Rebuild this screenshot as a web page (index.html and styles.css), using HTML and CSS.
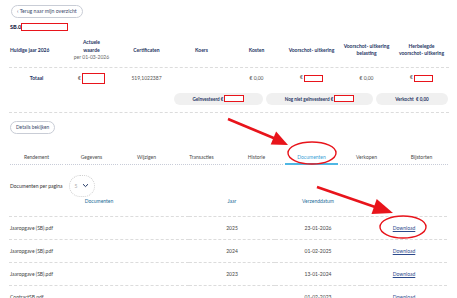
FILE: index.html
```html
<!DOCTYPE html>
<html lang="nl">
<head>
    <meta charset="UTF-8">
    <meta name="viewport" content="width=device-width, initial-scale=1.0">
    <title>SB.0 - Documenten</title>
    <link rel="stylesheet" href="styles.css">
</head>
<body>
    <div class="page">
        <a class="back-btn" href="#">&lsaquo; Terug naar mijn overzicht</a>
        <h1 class="fund">SB.0<span class="redact redact-title"></span></h1>

        <div class="summary">
            <div class="summary-row summary-head">
                <div class="cell first">Huidige jaar 2026</div>
                <div class="cell">Actuele<br>waarde<span class="sub">per 01-03-2026</span></div>
                <div class="cell">Certificaten</div>
                <div class="cell">Koers</div>
                <div class="cell">Kosten</div>
                <div class="cell">Voorschot- uitkering</div>
                <div class="cell">Voorschot- uitkering<br>belasting</div>
                <div class="cell">Herbelegde<br>voorschot- uitkering</div>
            </div>
            <div class="summary-row summary-total">
                <div class="cell label">Totaal</div>
                <div class="cell">&euro; <span class="redact redact-lg"></span></div>
                <div class="cell">519,1022387</div>
                <div class="cell"></div>
                <div class="cell">&euro; 0,00</div>
                <div class="cell">&euro; <span class="redact redact-sm"></span></div>
                <div class="cell">&euro; 0,00</div>
                <div class="cell">&euro; <span class="redact redact-sm"></span></div>
            </div>
            <div class="pills">
                <span class="pill pill-a">Geïnvesteerd &euro;<span class="redact redact-pill"></span></span>
                <span class="pill pill-b">Nog niet geïnvesteerd &euro;<span class="redact redact-pill"></span></span>
                <span class="pill pill-c">Verkocht &nbsp;&euro; 0,00</span>
            </div>
        </div>

        <a class="details-btn" href="#">Details bekijken</a>

        <nav class="tabs">
            <a class="tab" href="#"><span>Rendement</span></a>
            <a class="tab" href="#"><span>Gegevens</span></a>
            <a class="tab" href="#"><span>Wijzigen</span></a>
            <a class="tab" href="#"><span>Transacties</span></a>
            <a class="tab" href="#"><span>Historie</span></a>
            <a class="tab active" href="#"><span>Documenten</span></a>
            <a class="tab" href="#"><span>Verkopen</span></a>
            <a class="tab" href="#"><span>Bijstorten</span></a>
        </nav>

        <div class="per-page">
            <span>Documenten per pagina</span>
            <div class="select">
                <span class="select-value">5</span>
                <svg width="7" height="5" viewBox="0 0 7 5"><path d="M1 1.2 L3.5 3.6 L6 1.2" fill="none" stroke="#1e3463" stroke-width="1"/></svg>
            </div>
        </div>

        <table class="docs">
            <thead>
                <tr>
                    <th class="col-doc">Documenten</th>
                    <th>Jaar</th>
                    <th>Verzenddatum</th>
                    <th></th>
                </tr>
            </thead>
            <tbody>
                <tr>
                    <td class="col-doc">Jaaropgave (SB).pdf</td>
                    <td>2025</td>
                    <td>23-01-2026</td>
                    <td><a href="#">Download</a></td>
                </tr>
                <tr>
                    <td class="col-doc">Jaaropgave (SB).pdf</td>
                    <td>2024</td>
                    <td>01-02-2025</td>
                    <td><a href="#">Download</a></td>
                </tr>
                <tr>
                    <td class="col-doc">Jaaropgave (SB).pdf</td>
                    <td>2023</td>
                    <td>13-01-2024</td>
                    <td><a href="#">Download</a></td>
                </tr>
                <tr>
                    <td class="col-doc">ContractSB.pdf</td>
                    <td></td>
                    <td>01-02-2023</td>
                    <td><a href="#">Download</a></td>
                </tr>
            </tbody>
        </table>

        <!-- annotations drawn over the screenshot -->
        <svg class="marks" width="457" height="298" viewBox="0 0 457 298">
            <line x1="228" y1="119" x2="276" y2="139" stroke="#e8141b" stroke-width="2.6"/>
            <polygon points="270.7,144.5 276.1,131.5 288,145" fill="#e8141b"/>
            <ellipse cx="312" cy="153" rx="24" ry="11" fill="none" stroke="#e8141b" stroke-width="1.4"/>
            <line x1="317" y1="187" x2="378" y2="208" stroke="#e8141b" stroke-width="2.6"/>
            <polygon points="371.5,214.1 376.7,198.9 393,213" fill="#e8141b"/>
            <ellipse cx="403" cy="227" rx="23" ry="11" fill="none" stroke="#e8141b" stroke-width="1.4"/>
        </svg>
    </div>
</body>
</html>
```

FILE: styles.css
```css
body {
    margin: 0;
    font-family: Lato, "Open Sans", sans-serif;
    font-size: 5px;
    color: #4a4a4a;
    background: #fff;
}
.page {
    position: relative;
    height: 298px;
    overflow: hidden;
    padding: 5px 8px 0 9px;
    box-sizing: border-box;
}
a {
    color: inherit;
    text-decoration: none;
}
.back-btn {
    display: inline-block;
    margin-left: 2px;
    padding: 0 5px;
    height: 11px;
    line-height: 11px;
    border: 1px solid #c9cdd6;
    border-radius: 7px;
    font-size: 5.2px;
    color: #3b4a6b;
}
.fund {
    margin: 4px 0 0 1px;
    font-size: 5.6px;
    font-weight: 900;
    color: #1b2a4a;
    line-height: 9px;
    display: flex;
    align-items: center;
}
.redact {
    display: inline-block;
    box-sizing: border-box;
    border: 1.5px solid #e8141b;
    background: #fff;
    vertical-align: middle;
}
.redact-title {
    width: 47px;
    height: 8px;
}
.redact-lg {
    width: 23px;
    height: 11px;
}
.redact-sm {
    width: 19px;
    height: 7px;
}
.redact-pill {
    width: 20px;
    height: 7px;
    margin-left: 1px;
}

/* summary */
.summary-row {
    display: grid;
    grid-template-columns: repeat(8, 55px);
    align-items: center;
    text-align: center;
}
.summary-head {
    margin-top: 7px;
    padding: 1px 0 5px;
    border-bottom: 1px dashed #dcdcdc;
    font-weight: 700;
    color: #1e3463;
    line-height: 7.5px;
}
.summary-head .first {
    text-align: left;
    padding-left: 1px;
}
.sub {
    display: block;
    font-weight: 400;
    color: #666;
}
.summary-total {
    height: 17px;
    margin-top: 2px;
    color: #555;
}
.summary-total .label {
    font-weight: 700;
    color: #1e3463;
}
.pills {
    display: flex;
    justify-content: flex-end;
    gap: 3px;
    margin-top: 6px;
    padding: 0 1px 7px 0;
    border-bottom: 1px dashed #dcdcdc;
}
.pill {
    display: flex;
    align-items: center;
    justify-content: center;
    height: 12px;
    border-radius: 6px;
    background: #f0f0f0;
    font-size: 4.6px;
    font-weight: 700;
    color: #1e3463;
}
.pill-a { width: 89px; }
.pill-b { width: 107px; }
.pill-c { width: 72px; }

.details-btn {
    display: inline-block;
    margin: 8px 0 0 1px;
    padding: 0 5px;
    height: 11px;
    line-height: 11px;
    border: 1px solid #c9cdd6;
    border-radius: 7px;
    font-size: 4.8px;
    color: #3b4a6b;
}

/* tabs */
.tabs {
    display: grid;
    grid-template-columns: repeat(8, 55px);
    margin-top: 18px;
}
.tab {
    display: block;
    padding: 0 1px;
    text-align: center;
    color: #4a4a4a;
}
.tab span {
    display: block;
    height: 12px;
    line-height: 11px;
    border-bottom: 1px dotted #c8ccd8;
}
.tab.active {
    color: #3a9fd6;
}
.tab.active span {
    border-bottom: 2px solid #4fb7e4;
    height: 11px;
}

/* per page */
.per-page {
    display: flex;
    align-items: center;
    gap: 6px;
    margin: 10px 0 0 1px;
    color: #333;
}
.select {
    display: flex;
    align-items: center;
    gap: 5px;
    width: 26px;
    height: 22px;
    box-sizing: border-box;
    padding-left: 5px;
    border: 1px dotted #d0d0d0;
    border-radius: 11px;
}
.select-value {
    color: #aaa;
}

/* documents */
.docs {
    width: 437px;
    border-collapse: collapse;
    table-layout: fixed;
}
.docs th,
.docs td {
    text-align: center;
    font-weight: 400;
    padding: 0;
    width: 86px;
}
.docs .col-doc {
    width: 180px;
}
.docs th {
    height: 18px;
    padding-top: 1px;
    vertical-align: top;
    color: #236c98;
    border-bottom: 1px dashed #dcdcdc;
}
.docs td {
    height: 22.2px;
    color: #444;
    border-bottom: 1px dashed #dcdcdc;
}
.docs td.col-doc {
    text-align: left;
    padding-left: 1px;
}
.docs td a {
    color: #2c4a8c;
    text-decoration: underline;
}

.marks {
    position: absolute;
    top: 0;
    left: 0;
    pointer-events: none;
}
```
